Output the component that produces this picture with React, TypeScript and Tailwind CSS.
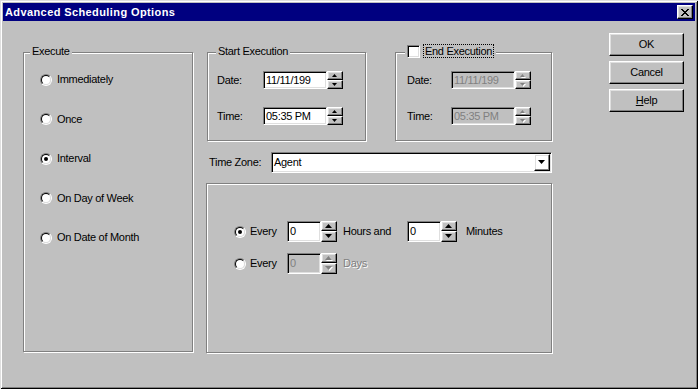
import type { ReactNode } from "react";

const RAISED =
  "border border-t-white border-l-white border-r-black border-b-black shadow-[inset_-1px_-1px_0_#808080,inset_1px_1px_0_#dfdfdf]";
const SUNKEN =
  "border border-t-[#808080] border-l-[#808080] border-r-white border-b-white shadow-[inset_1px_1px_0_#000,inset_-1px_-1px_0_#dfdfdf]";
const ETCHED = "border border-[#808080] shadow-[inset_1px_1px_0_#fff,1px_1px_0_#fff]";

// pixel rows of the close glyph: [x, width]
const CLOSE_X: [number, number][][] = [
  [[0, 2], [6, 2]],
  [[1, 2], [5, 2]],
  [[2, 4]],
  [[3, 2]],
  [[2, 4]],
  [[1, 2], [5, 2]],
  [[0, 2], [6, 2]],
];

const Radio = ({ checked }: { checked?: boolean }) => (
  <div className="h-[12px] w-[12px] shrink-0 rounded-full border border-t-[#808080] border-l-[#808080] border-r-white border-b-white">
    <div className="flex h-full w-full items-center justify-center rounded-full border border-t-black border-l-black border-r-[#dfdfdf] border-b-[#dfdfdf] bg-white">
      {checked ? <div className="h-[4px] w-[4px] rounded-full bg-black" /> : null}
    </div>
  </div>
);

const Arrow = ({ up, big, disabled }: { up?: boolean; big?: boolean; disabled?: boolean }) => {
  const w = big ? 7 : 5;
  const h = big ? 4 : 3;
  const pts = up ? `0,${h} ${w / 2},0 ${w},${h}` : `0,0 ${w / 2},${h} ${w},0`;
  return (
    <svg width={w + 1} height={h + 1} viewBox={`0 0 ${w + 1} ${h + 1}`} className="block">
      {disabled ? <polygon points={pts} fill="#fff" transform="translate(1,1)" /> : null}
      <polygon points={pts} fill={disabled ? "#808080" : "#000"} />
    </svg>
  );
};

const Spinner = ({ big, disabled }: { big?: boolean; disabled?: boolean }) => (
  <div className="flex w-[16px] shrink-0 flex-col">
    <div className={`flex w-[16px] items-center justify-center ${big ? "h-[10px]" : "h-[9px]"} ${RAISED}`}>
      <Arrow up big={big} disabled={disabled} />
    </div>
    <div className={`flex w-[16px] items-center justify-center ${big ? "h-[11px]" : "h-[9px]"} ${RAISED}`}>
      <Arrow big={big} disabled={disabled} />
    </div>
  </div>
);

const Field = ({ value, w, h, disabled }: { value: string; w: string; h: string; disabled?: boolean }) => (
  <div
    className={`${w} ${h} ${SUNKEN} flex shrink-0 items-center overflow-hidden whitespace-nowrap pl-[2px] ${
      disabled ? "bg-[#c0c0c0] text-[#808080]" : "bg-white text-black"
    }`}
  >
    {value}
  </div>
);

const Group = ({ className, legend, children }: { className: string; legend: ReactNode; children: ReactNode }) => (
  <div className={`relative ${ETCHED} ${className}`}>
    {legend}
    {children}
  </div>
);

const Button = ({ children }: { children: ReactNode }) => (
  <div className={`flex h-[23px] w-[75px] items-center justify-center ${RAISED}`}>{children}</div>
);

const EXECUTE = ["Immediately", "Once", "Interval", "On Day of Week", "On Date of Month"];

export default function App() {
  return (
    <div className="relative h-[389px] w-[698px] overflow-hidden bg-[#c0c0c0] p-[3px] font-['Liberation_Sans',Arial,sans-serif] text-[11px] leading-[13px] tracking-[-0.3px] text-black shadow-[inset_1px_1px_0_#dfdfdf,inset_-1px_-1px_0_#000,inset_2px_2px_0_#fff,inset_-2px_-2px_0_#808080]">
      {/* title bar */}
      <div className="flex h-[18px] items-center justify-between bg-[#000080] px-[2px]">
        <span className="text-[11px] font-bold tracking-[0.4px] text-white">Advanced Scheduling Options</span>
        <div className={`flex h-[14px] w-[16px] shrink-0 items-center justify-center bg-[#c0c0c0] ${RAISED}`}>
          <svg width="8" height="7" viewBox="0 0 8 7" className="block h-[7px] w-[8px]" shapeRendering="crispEdges">
            {CLOSE_X.map((row, y) =>
              row.map(([x, w]) => <rect key={`${y}-${x}`} x={x} y={y} width={w} height={1} fill="#000" />),
            )}
          </svg>
        </div>
      </div>

      <div className="flex items-start pl-[20px]">
        {/* Execute */}
        <Group
          className="mt-[31px] h-[300px] w-[170px] pl-[16px] pt-[20px]"
          legend={
            <span className="absolute left-[6px] top-[-8px] bg-[#c0c0c0] px-[2px]">Execute</span>
          }
        >
          <div className="flex flex-col gap-[26.5px]">
            {EXECUTE.map((label) => (
              <div key={label} className="flex h-[13px] items-center">
                <Radio checked={label === "Interval"} />
                <span className="ml-[5px]">{label}</span>
              </div>
            ))}
          </div>
        </Group>

        {/* middle */}
        <div className="ml-[13px] mt-[31px] flex w-[346px] flex-col">
          <div className="flex">
            <Group
              className="ml-[1px] h-[89px] w-[159px] pl-[9px] pt-[18px]"
              legend={
                <span className="absolute left-[8px] top-[-8px] bg-[#c0c0c0] px-[2px]">Start Execution</span>
              }
            >
              <div className="flex h-[18px] items-center">
                <span className="w-[46px]">Date:</span>
                <Field value="11/11/199" w="w-[64px]" h="h-[18px]" />
                <Spinner />
              </div>
              <div className="mt-[18px] flex h-[18px] items-center">
                <span className="w-[46px]">Time:</span>
                <Field value="05:35 PM" w="w-[64px]" h="h-[18px]" />
                <Spinner />
              </div>
            </Group>

            <Group
              className="ml-[29px] h-[89px] w-[157px] pl-[11px] pt-[18px]"
              legend={
                <div className="absolute left-[9px] top-[-9px] flex h-[14px] items-center bg-[#c0c0c0] px-[2px]">
                  <div className={`h-[13px] w-[13px] bg-white ${SUNKEN}`} />
                  <span className="ml-[3px] border border-dotted border-black px-[1px] leading-[12px]">
                    End Execution
                  </span>
                </div>
              }
            >
              <div className="flex h-[18px] items-center">
                <span className="w-[44px]">Date:</span>
                <Field value="11/11/199" w="w-[64px]" h="h-[18px]" disabled />
                <Spinner disabled />
              </div>
              <div className="mt-[18px] flex h-[18px] items-center">
                <span className="w-[44px]">Time:</span>
                <Field value="05:35 PM" w="w-[64px]" h="h-[18px]" disabled />
                <Spinner disabled />
              </div>
            </Group>
          </div>

          <div className="mt-[11px] flex h-[21px] items-center">
            <span className="ml-[3px] w-[62px]">Time Zone:</span>
            <div className={`flex h-[21px] w-[281px] items-center justify-between bg-white ${SUNKEN}`}>
              <span className="pl-[2px]">Agent</span>
              <div className={`mr-[1px] flex h-[17px] w-[16px] items-center justify-center ${RAISED}`}>
                <Arrow big />
              </div>
            </div>
          </div>

          <div className={`mt-[10px] h-[170px] w-[346px] pl-[27px] pt-[37px] ${ETCHED}`}>
            <div className="flex h-[21px] items-center">
              <Radio checked />
              <span className="ml-[4px] w-[37px]">Every</span>
              <Field value="0" w="w-[34px]" h="h-[21px]" />
              <Spinner big />
              <span className="ml-[6px] w-[64px]">Hours and</span>
              <Field value="0" w="w-[34px]" h="h-[21px]" />
              <Spinner big />
              <span className="ml-[9px]">Minutes</span>
            </div>
            <div className="mt-[11px] flex h-[21px] items-center">
              <Radio />
              <span className="ml-[4px] w-[37px]">Every</span>
              <Field value="0" w="w-[34px]" h="h-[21px]" disabled />
              <Spinner big disabled />
              <span className="ml-[6px] text-[#808080] [text-shadow:1px_1px_0_#fff]">Days</span>
            </div>
          </div>
        </div>

        {/* buttons */}
        <div className="ml-[57px] mt-[12px] flex flex-col gap-[5px]">
          <Button>OK</Button>
          <Button>Cancel</Button>
          <Button>
            <span>
              <span className="underline">H</span>elp
            </span>
          </Button>
        </div>
      </div>
    </div>
  );
}
